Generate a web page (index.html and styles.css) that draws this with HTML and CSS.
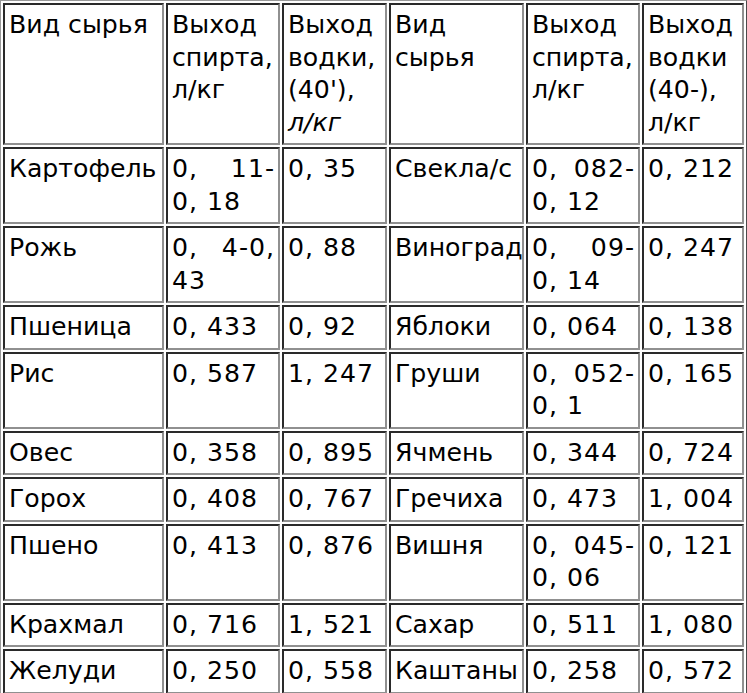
FILE: index.html
```html
<!DOCTYPE html>
<html lang="ru">
<head>
<meta charset="utf-8">
<title>Выход спирта</title>
<link rel="stylesheet" href="styles.css">
</head>
<body>
<table class="yield">
  <colgroup>
    <col class="c1"><col class="c2"><col class="c3"><col class="c4"><col class="c5"><col class="c6">
  </colgroup>
  <tr>
    <td>Вид сырья</td>
    <td>Выход спирта, л/кг</td>
    <td>Выход водки, (40'), <i>л/кг</i></td>
    <td>Вид сырья</td>
    <td>Выход спирта, л/кг</td>
    <td>Выход водки (40-), л/кг</td>
  </tr>
  <tr><td>Картофель</td><td>0, 11-0, 18</td><td>0, 35</td><td>Свекла/с</td><td>0, 082-0, 12</td><td>0, 212</td></tr>
  <tr><td>Рожь</td><td>0, 4-0, 43</td><td>0, 88</td><td>Виноград</td><td>0, 09-0, 14</td><td>0, 247</td></tr>
  <tr><td>Пшеница</td><td>0, 433</td><td>0, 92</td><td>Яблоки</td><td>0, 064</td><td>0, 138</td></tr>
  <tr><td>Рис</td><td>0, 587</td><td>1, 247</td><td>Груши</td><td>0, 052-0, 1</td><td>0, 165</td></tr>
  <tr><td>Овес</td><td>0, 358</td><td>0, 895</td><td>Ячмень</td><td>0, 344</td><td>0, 724</td></tr>
  <tr><td>Горох</td><td>0, 408</td><td>0, 767</td><td>Гречиха</td><td>0, 473</td><td>1, 004</td></tr>
  <tr><td>Пшено</td><td>0, 413</td><td>0, 876</td><td>Вишня</td><td>0, 045-0, 06</td><td>0, 121</td></tr>
  <tr><td>Крахмал</td><td>0, 716</td><td>1, 521</td><td>Сахар</td><td>0, 511</td><td>1, 080</td></tr>
  <tr><td>Желуди</td><td>0, 250</td><td>0, 558</td><td>Каштаны</td><td>0, 258</td><td>0, 572</td></tr>
</table>
</body>
</html>
```

FILE: styles.css
```css
html, body {
  margin: 0;
  padding: 0;
  background: #ffffff;
}

.yield {
  width: 747px;
  table-layout: fixed;
  border-collapse: separate;
  border-spacing: 2px;
  border: 1px solid;
  border-color: #9a9a9a #4a4a4a #4a4a4a #9a9a9a;
  font-family: "DejaVu Sans", Verdana, sans-serif;
  font-size: 25.2px;
  line-height: 32.5px;
  color: #000000;
}

.yield td {
  box-sizing: border-box;
  vertical-align: top;
  text-align: justify;
  padding: 4px 3px 4px 4px;
  border: 2px solid;
  border-color: #2a2a2a #909090 #909090 #2a2a2a;
}

/* numeric value cells are set a little looser, like the wider figures of the original */
.yield tr + tr td:not(:nth-child(3n+1)) {
  letter-spacing: 1px;
}

.c1 { width: 161px; }
.c2 { width: 114px; }
.c3 { width: 105px; }
.c4 { width: 135px; }
.c5 { width: 114px; }
.c6 { width: 102px; }
```
